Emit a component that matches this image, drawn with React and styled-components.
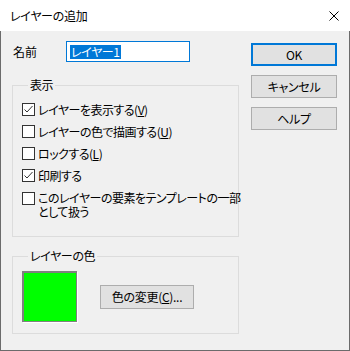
import React from 'react'
import styled, { createGlobalStyle } from 'styled-components'

const GlobalStyle = createGlobalStyle`
  html, body {
    margin: 0;
    padding: 0;
    background: #ffffff;
  }
  body {
    font-family: "Noto Sans CJK JP", "Noto Sans", sans-serif;
    font-size: 12px;
    color: #000000;
    font-feature-settings: "palt";
  }
`

const Window = styled.div`
  width: 350px;
  height: 351px;
  display: flex;
  flex-direction: column;
  background: #ffffff;
`

const TitleBar = styled.div`
  height: 31px;
  flex-shrink: 0;
  display: flex;
  align-items: center;
  justify-content: space-between;
  padding: 0 11px 0 10px;
  background: #ffffff;
`

const Title = styled.span`
  font-size: 12px;
  line-height: 16px;
  letter-spacing: -0.3px;
`

const CloseIcon = styled.svg`
  width: 10px;
  height: 10px;
  display: block;
`

const Body = styled.div`
  flex: 1;
  display: flex;
  background: #f0f0f0;
  border: 1px solid #6b6b6b;
  border-top: none;
  padding: 10px 0 0 11px;
`

const Left = styled.div`
  width: 227px;
  display: flex;
  flex-direction: column;
`

const NameRow = styled.div`
  display: flex;
  align-items: center;
  height: 21px;
  padding-left: 1px;
`

const NameLabel = styled.span`
  width: 53px;
`

const NameInput = styled.div`
  box-sizing: border-box;
  width: 124px;
  height: 21px;
  border: 1px solid #0078d7;
  background: #ffffff;
  display: flex;
  align-items: center;
  padding-left: 3px;
`

const Selected = styled.span`
  background: #0078d7;
  color: #ffffff;
  line-height: 14px;
  padding: 0 1px;
  letter-spacing: -0.4px;
`

const Group = styled.fieldset`
  margin: ${p => p.$top}px 0 0 0;
  padding: ${p => p.$pad};
  border: 1px solid #dcdcdc;
  min-width: 0;
`

const Legend = styled.legend`
  padding: 0 2px;
  margin-left: 6px;
  line-height: 14px;
  letter-spacing: -0.4px;
`

const Row = styled.label`
  display: flex;
  align-items: ${p => (p.$multi ? 'flex-start' : 'center')};
  gap: 3px;
  min-height: 22px;
  padding-top: ${p => (p.$multi ? 5 : 0)}px;
  line-height: ${p => (p.$multi ? 14 : 13)}px;
  white-space: nowrap;
  letter-spacing: -0.5px;
`

const Box = styled.span`
  box-sizing: border-box;
  width: 13px;
  height: 13px;
  margin-top: ${p => (p.$multi ? 1 : 0)}px;
  flex-shrink: 0;
  border: 1px solid #333333;
  background: #ffffff;
  display: flex;
  align-items: center;
  justify-content: center;
`

const ColorRow = styled.div`
  display: flex;
  align-items: center;
`

const Swatch = styled.div`
  box-sizing: border-box;
  width: 55px;
  height: 51px;
  background: ${p => p.$color};
  border: 1px solid #808080;
  border-top-width: 2px;
  border-left-width: 2px;
  box-shadow: 1px 1px 0 #ffffff;
`

const Button = styled.button`
  box-sizing: border-box;
  width: ${p => p.$w || 86}px;
  height: ${p => p.$h || 23}px;
  margin: 0 0 0 ${p => p.$ml || 0}px;
  padding: 0;
  font-family: inherit;
  font-size: 12px;
  font-feature-settings: "palt";
  letter-spacing: -0.3px;
  color: #000000;
  background: #e1e1e1;
  border: ${p => (p.$default ? '2px solid #0078d7' : '1px solid #adadad')};
`

const Right = styled.div`
  margin: 2px 0 0 12px;
  display: flex;
  flex-direction: column;
  gap: 9px;
`

const Check = ({ checked, multi }) => (
  <Box $multi={multi}>
    {checked && (
      <svg width='11' height='11' viewBox='0 0 11 11'>
        <path d='M1.5 5.5 L4 8 L9.5 2' fill='none' stroke='#333' strokeWidth='1' />
      </svg>
    )}
  </Box>
)

const options = [
  { text: 'レイヤーを表示する', key: 'V', checked: true },
  { text: 'レイヤーの色で描画する', key: 'U' },
  { text: 'ロックする', key: 'L' },
  { text: '印刷する', checked: true },
]

const App = () => {
  return (
    <>
      <GlobalStyle />
      <Window>
        <TitleBar>
          <Title>レイヤーの追加</Title>
          <CloseIcon viewBox='0 0 10 10'>
            <path d='M0.5 0.5 L9.5 9.5 M9.5 0.5 L0.5 9.5' stroke='#000' strokeWidth='1' />
          </CloseIcon>
        </TitleBar>
        <Body>
          <Left>
            <NameRow>
              <NameLabel>名前</NameLabel>
              <NameInput>
                <Selected>レイヤー1</Selected>
              </NameInput>
            </NameRow>

            <Group $top={16} $pad='6px 8px 17px 9px'>
              <Legend>表示</Legend>
              {options.map(o => (
                <Row key={o.text}>
                  <Check checked={o.checked} />
                  <span>
                    {o.text}
                    {o.key && (
                      <>
                        (<u>{o.key}</u>)
                      </>
                    )}
                  </span>
                </Row>
              ))}
              <Row $multi>
                <Check multi />
                <span>
                  このレイヤーの要素をテンプレートの一部
                  <br />
                  として扱う
                </span>
              </Row>
            </Group>

            <Group $top={12} $pad='8px 8px 11px 9px'>
              <Legend>レイヤーの色</Legend>
              <ColorRow>
                <Swatch $color='#00ff00' />
                <Button $w={94} $h={24} $ml={23}>
                  色の変更(<u>C</u>)...
                </Button>
              </ColorRow>
            </Group>
          </Left>

          <Right>
            <Button $default>OK</Button>
            <Button>キャンセル</Button>
            <Button>ヘルプ</Button>
          </Right>
        </Body>
      </Window>
    </>
  )
}

export default App
